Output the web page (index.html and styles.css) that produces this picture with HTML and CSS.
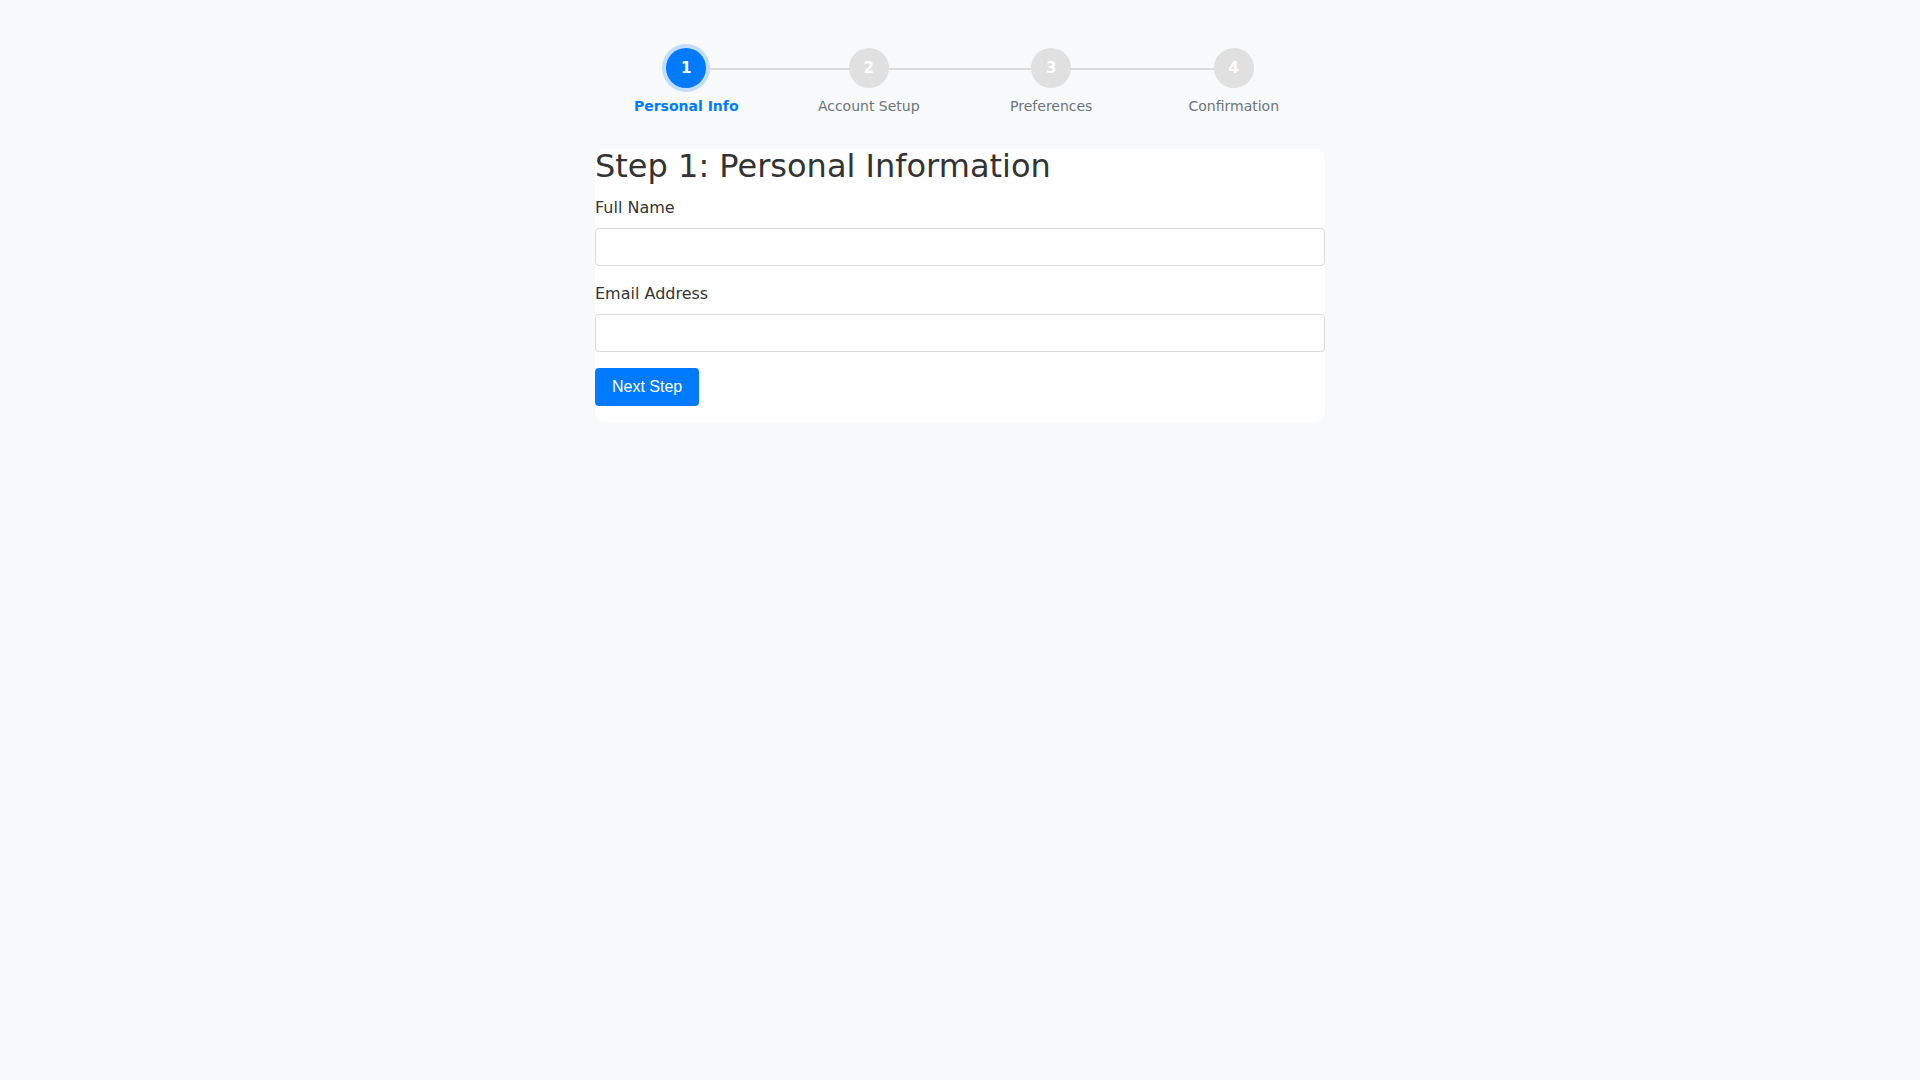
FILE: index.html
```html
<!DOCTYPE html>
<html lang="en">
<head>
<meta charset="utf-8">
<title>Multi-step Form</title>
<link rel="stylesheet" href="styles.css">
</head>
<body>
<div class="wrap">
  <div class="stepper">
    <div class="step active"><div class="circle">1</div><div class="step-label">Personal Info</div></div>
    <div class="step"><div class="circle">2</div><div class="step-label">Account Setup</div></div>
    <div class="step"><div class="circle">3</div><div class="step-label">Preferences</div></div>
    <div class="step last"><div class="circle">4</div><div class="step-label">Confirmation</div></div>
  </div>
  <div class="card">
    <h1 class="title">Step 1: Personal Information</h1>
    <div class="group">
      <label class="label" for="name">Full Name</label>
      <input class="input" id="name" type="text">
    </div>
    <div class="group">
      <label class="label" for="email">Email Address</label>
      <input class="input" id="email" type="email">
    </div>
    <button class="btn" type="button">Next Step</button>
  </div>
</div>
</body>
</html>
```
FILE: styles.css
```css
html, body {
  margin: 0;
  padding: 0;
  background: #f8f9fa;
  font-family: "DejaVu Sans", sans-serif;
  color: #333;
}
.wrap {
  width: 730px;
  margin: 0 auto;
  padding-top: 48px;
}
.stepper {
  display: flex;
}
.step {
  flex: 1;
  display: flex;
  flex-direction: column;
  align-items: center;
  position: relative;
}
.step::after {
  content: "";
  position: absolute;
  top: 20px;
  left: 50%;
  width: 100%;
  height: 2px;
  background: #dcdcdc;
  z-index: 0;
}
.step.last::after {
  display: none;
}
.circle {
  position: relative;
  z-index: 1;
  width: 40px;
  height: 40px;
  border-radius: 50%;
  background: #e0e0e0;
  color: #fff;
  font-weight: bold;
  font-size: 15px;
  display: flex;
  align-items: center;
  justify-content: center;
}
.step.active .circle {
  background: #007bff;
  box-shadow: 0 0 0 4px #c2ddfb;
}
.step-label {
  margin-top: 10px;
  font-size: 14px;
  color: #6c757d;
}
.step.active .step-label {
  color: #007bff;
  font-weight: bold;
}
.card {
  margin-top: 35px;
  background: #fff;
  border-radius: 10px;
  padding-bottom: 16px;
}
.title {
  margin: 0 0 15px;
  font-size: 32px;
  font-weight: normal;
  line-height: 34px;
  color: #333;
}
.group {
  margin-bottom: 18px;
}
.group + .group + .btn {
  margin-top: -2px;
}
.label {
  display: block;
  font-size: 16px;
  margin-bottom: 11px;
  color: #333;
}
.input {
  display: block;
  box-sizing: border-box;
  width: 100%;
  height: 38px;
  border: 1px solid #dcdcdc;
  border-radius: 4px;
  background: #fff;
  margin: 0;
  padding: 6px 10px;
  font-size: 16px;
}
.btn {
  display: block;
  height: 38px;
  padding: 0 17px;
  border: none;
  border-radius: 4px;
  background: #007bff;
  color: #fff;
  font-family: "Liberation Sans", Arial, sans-serif;
  font-size: 16px;
  cursor: pointer;
}
```
